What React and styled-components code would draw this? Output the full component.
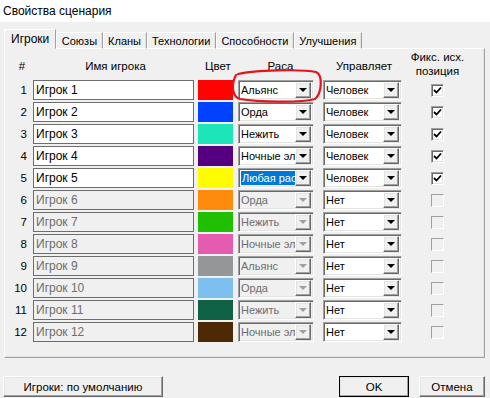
import React from 'react';
import styled, { createGlobalStyle } from 'styled-components';

const GlobalStyle = createGlobalStyle`
  html, body {
    margin: 0;
    padding: 0;
    background: #f0f0f0;
  }
  body {
    font-family: "Liberation Sans", Arial, sans-serif;
    font-size: 11px;
    color: #000;
  }
`;

const players = [
  { color: '#ff0303', race: 'Альянс', ctrl: 'Человек', on: true },
  { color: '#0042ff', race: 'Орда', ctrl: 'Человек', on: true },
  { color: '#1ce6b9', race: 'Нежить', ctrl: 'Человек', on: true },
  { color: '#540081', race: 'Ночные эльфы', ctrl: 'Человек', on: true },
  { color: '#fffc01', race: 'Любая раса', ctrl: 'Человек', on: true, selected: true },
  { color: '#fe8a0e', race: 'Орда', ctrl: 'Нет' },
  { color: '#20c000', race: 'Нежить', ctrl: 'Нет' },
  { color: '#e55bb0', race: 'Ночные эльфы', ctrl: 'Нет' },
  { color: '#959697', race: 'Альянс', ctrl: 'Нет' },
  { color: '#7ebff1', race: 'Орда', ctrl: 'Нет' },
  { color: '#106246', race: 'Нежить', ctrl: 'Нет' },
  { color: '#4e2a04', race: 'Ночные эльфы', ctrl: 'Нет' },
];

const tabs = ['Игроки', 'Союзы', 'Кланы', 'Технологии', 'Способности', 'Улучшения'];

const Window = styled.div`
  position: relative;
  width: 490px;
  height: 398px;
  overflow: hidden;
`;

const TitleBar = styled.div`
  height: 22px;
  background: #fff;
  display: flex;
  align-items: center;
  padding-left: 3px;
  font-size: 12px;
`;

const Body = styled.div`
  padding: 7px 5px 0 4px;
`;

const TabStrip = styled.div`
  display: flex;
  align-items: flex-end;
  height: 20px;
  position: relative;
  z-index: 1;
  margin-bottom: -1px;
`;

const Tab = styled.div`
  height: ${(p) => (p.$active ? '20px' : '17px')};
  padding: 0 ${(p) => (p.$active ? '6px' : '4.5px')};
  display: flex;
  align-items: center;
  box-sizing: border-box;
  background: #f0f0f0;
  border: 1px solid;
  border-color: #fff #a0a0a0 ${(p) => (p.$active ? '#f0f0f0' : '#fff')} #fff;
  box-shadow: ${(p) => (p.$active ? 'none' : 'inset -1px 0 0 #e3e3e3')};
  font-size: ${(p) => (p.$active ? '12px' : '11px')};
  padding-top: ${(p) => (p.$active ? '0' : '1px')};
`;

const Panel = styled.div`
  width: 481px;
  height: 310px;
  box-sizing: border-box;
  border: 1px solid;
  border-color: #fff #a0a0a0 #a0a0a0 #fff;
  box-shadow: inset -1px -1px 0 #e3e3e3;
`;

const Grid = styled.div`
  display: grid;
  grid-template-columns: 28px 165px 40px 85px 82px 1fr;
  grid-auto-rows: 22px;
  grid-template-rows: 30px;
  align-items: center;
`;

const HeadCell = styled.div`
  text-align: center;
  line-height: 14px;
  font-size: 11.5px;
  margin-left: ${(p) => p.$shift || 0}px;
  padding-top: ${(p) => p.$top || 0}px;
`;

const Num = styled.div`
  text-align: right;
  padding-right: 6px;
  font-size: 11.5px;
`;

const NameBox = styled.div`
  width: 161px;
  height: 20px;
  box-sizing: border-box;
  border: 1px solid #6d6d6d;
  background: ${(p) => (p.$disabled ? '#f0f0f0' : '#fff')};
  color: ${(p) => (p.$disabled ? '#6d6d6d' : '#000')};
  display: flex;
  align-items: center;
  padding-left: 2px;
  font-size: 12px;
`;

const Swatch = styled.div`
  width: 35px;
  height: 20px;
  background: ${(p) => p.$color};
`;

const Combo = styled.div`
  width: ${(p) => p.$width}px;
  height: 20px;
  box-sizing: border-box;
  border: 1px solid;
  border-color: #a0a0a0 #fff #fff #a0a0a0;
  box-shadow: inset 1px 1px 0 #696969, inset -1px -1px 0 #e3e3e3;
  background: ${(p) => (p.$disabled ? '#f0f0f0' : '#fff')};
  display: flex;
  align-items: center;
  padding: 2px;
`;

const ComboText = styled.div`
  flex: 1;
  min-width: 0;
  overflow: hidden;
  white-space: nowrap;
  height: 14px;
  line-height: 14px;
  font-size: 11px;
  color: ${(p) => (p.$disabled ? '#6d6d6d' : '#000')};
`;

const Highlight = styled.span`
  background: #0078d7;
  color: #fff;
  display: inline-block;
  padding: 0 1px;
`;

const DropButton = styled.div`
  width: 16px;
  height: 16px;
  flex: none;
  box-sizing: border-box;
  border: 1px solid;
  border-color: #fff #696969 #696969 #fff;
  box-shadow: inset -1px -1px 0 #a0a0a0, inset 1px 1px 0 #e3e3e3;
  background: #f0f0f0;
  display: flex;
  align-items: center;
  justify-content: center;
`;

const Arrow = styled.div`
  width: 0;
  height: 0;
  border-left: 4px solid transparent;
  border-right: 4px solid transparent;
  border-top: 4px solid ${(p) => (p.$disabled ? '#a0a0a0' : '#000')};
`;

const Check = styled.div`
  width: 13px;
  height: 13px;
  box-sizing: border-box;
  margin-left: 26px;
  border: 1px solid;
  border-color: #a0a0a0 #fff #fff #a0a0a0;
  box-shadow: ${(p) => (p.$disabled ? 'none' : 'inset 1px 1px 0 #696969, inset -1px -1px 0 #e3e3e3')};
  background: ${(p) => (p.$disabled ? '#f0f0f0' : '#fff')};
  display: flex;
  align-items: center;
  justify-content: center;
`;

const Footer = styled.div`
  display: flex;
  align-items: center;
  margin: 18px 0 0 -1px;
`;

const Button = styled.div`
  width: ${(p) => p.$width}px;
  height: 21px;
  box-sizing: border-box;
  margin-left: ${(p) => p.$gap || 0}px;
  border: 1px solid;
  border-color: #fff #696969 #696969 #fff;
  box-shadow: inset -1px -1px 0 #a0a0a0, inset 1px 1px 0 #e3e3e3;
  outline: ${(p) => (p.$default ? '1px solid #000' : 'none')};
  outline-offset: -1px;
  background: #f0f0f0;
  display: flex;
  align-items: center;
  justify-content: center;
  font-size: 11.5px;
`;

const Scribble = styled.svg`
  position: absolute;
  left: 0;
  top: 0;
  pointer-events: none;
`;

const ComboBox = ({ width, disabled, children }) => (
  <Combo $width={width} $disabled={disabled}>
    <ComboText $disabled={disabled}>{children}</ComboText>
    <DropButton>
      <Arrow $disabled={disabled} />
    </DropButton>
  </Combo>
);

export default function App() {
  return (
    <Window>
      <GlobalStyle />
      <TitleBar>Свойства сценария</TitleBar>
      <Body>
        <TabStrip>
          {tabs.map((t, i) => (
            <Tab key={t} $active={i === 0}>
              {t}
            </Tab>
          ))}
        </TabStrip>
        <Panel>
          <Grid>
            <HeadCell $shift={6} $top={4}>#</HeadCell>
            <HeadCell $top={4}>Имя игрока</HeadCell>
            <HeadCell $top={4}>Цвет</HeadCell>
            <HeadCell $top={4}>Раса</HeadCell>
            <HeadCell $top={4}>Управляет</HeadCell>
            <HeadCell $shift={-14}>
              Фикс. исх.
              <br />
              позиция
            </HeadCell>
            {players.map((p, i) => {
              const off = !p.on;
              return (
                <React.Fragment key={i}>
                  <Num>{i + 1}</Num>
                  <NameBox $disabled={off}>Игрок {i + 1}</NameBox>
                  <Swatch $color={p.color} />
                  <ComboBox width={76} disabled={off}>
                    {p.selected ? <Highlight>{p.race}</Highlight> : p.race}
                  </ComboBox>
                  <ComboBox width={79}>{p.ctrl}</ComboBox>
                  <Check $disabled={off}>
                    {p.on && (
                      <svg width="9" height="9" viewBox="0 0 9 9">
                        <path d="M1 4 L3.5 6.5 L8 1.5" fill="none" stroke="#000" strokeWidth="1.8" />
                      </svg>
                    )}
                  </Check>
                </React.Fragment>
              );
            })}
          </Grid>
        </Panel>
        <Footer>
          <Button $width={160}>Игроки: по умолчанию</Button>
          <Button $width={70} $gap={176} $default>
            OK
          </Button>
          <Button $width={66} $gap={10}>
            Отмена
          </Button>
        </Footer>
      </Body>
      <Scribble width="490" height="398">
        <path
          d="M238 74 C 255 70, 302 69, 316 72 C 323 75, 322 93, 315 99 C 300 103, 258 102, 240 99 C 232 97, 231 84, 236 75"
          fill="none"
          stroke="#e5141c"
          strokeWidth="2.2"
          strokeLinecap="round"
        />
      </Scribble>
    </Window>
  );
}
